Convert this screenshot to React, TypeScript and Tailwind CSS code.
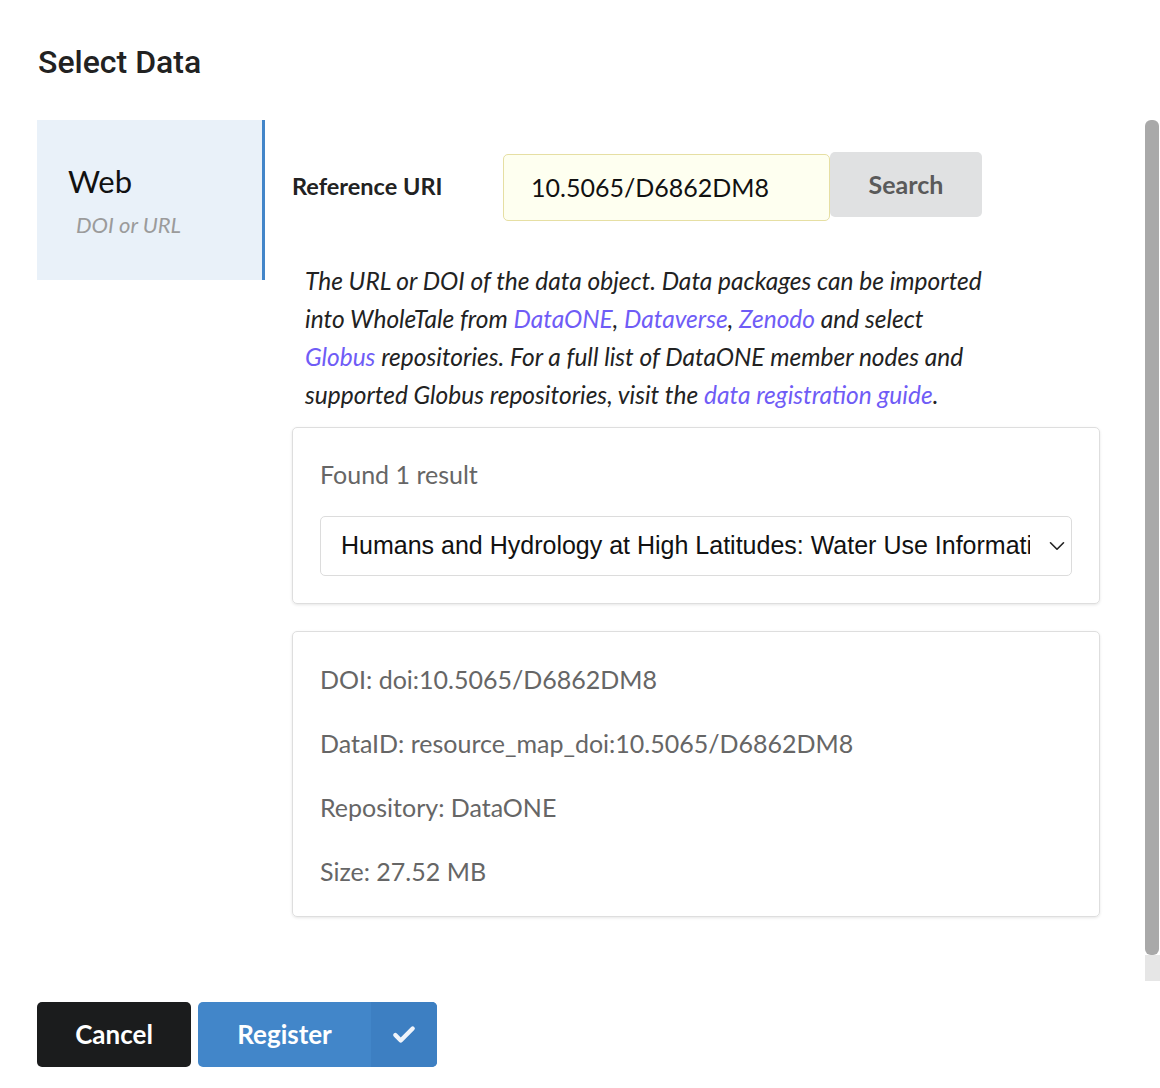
import { ChevronDown, Check } from "lucide-react";

const lato = "font-['Lato','Liberation_Sans',sans-serif]";

function DetailLine({ children }: { children: React.ReactNode }) {
  return <p className="text-[25px] leading-[30px] text-[#666]">{children}</p>;
}

export default function App() {
  return (
    <div className={`w-[1160px] h-[1088px] bg-white ${lato} text-[#1f1f1f]`}>
      <div className="h-[120px] pl-[38px] pt-[44px]">
        <h1 className="font-['Roboto',sans-serif] font-medium text-[32px] leading-[36px] text-[#222]">Select Data</h1>
      </div>

      <div className="flex h-[861px]">
        <div className="pl-[37px] flex gap-[27px]">
          {/* tabs */}
          <div className="w-[228px] h-[160px] bg-[#e9f1f9] border-r-[3px] border-[#4285c9] pl-[31px] pt-[42px]">
            <div className="text-[31px] leading-[38px] text-[#111]">Web</div>
            <div className="pl-[8px] mt-[11px] italic text-[22px] leading-[28px] text-[#9b9b9b]">DOI or URL</div>
          </div>

          {/* main */}
          <div className="w-[808px] pt-[32px]">
            <div className="flex items-start">
              <label className="w-[211px] pt-[20px] font-bold text-[23.5px] leading-[28px] text-[#222]">Reference URI</label>
              <div className="mt-[2px] w-[327px] h-[67px] rounded-[5px] border border-[#e6dfa3] bg-[#fefff0] pl-[27px] flex items-center text-[25px] text-[#111]">
                10.5065/D6862DM8
              </div>
              <button className="w-[152px] h-[65px] rounded-[5px] bg-[#e0e1e2] text-[#5a5a5a] font-bold text-[25px]">Search</button>
            </div>

            <p className="mt-[41px] ml-[13px] w-[692px] italic text-[24.5px] leading-[38px] text-[#222]">
              The URL or DOI of the data object. Data packages can be imported into WholeTale from{" "}
              <a className="text-[#6f5cf6]">DataONE</a>, <a className="text-[#6f5cf6]">Dataverse</a>,{" "}
              <a className="text-[#6f5cf6]">Zenodo</a> and select <a className="text-[#6f5cf6]">Globus</a> repositories. For a
              full list of DataONE member nodes and supported Globus repositories, visit the{" "}
              <a className="text-[#6f5cf6]">data registration guide</a>.
            </p>

            <div className="mt-[13px] rounded-[5px] border border-[#dedede] shadow-[0_1px_3px_rgba(0,0,0,0.1)] px-[27px] pt-[31px] pb-[27px]">
              <p className="text-[25px] leading-[30px] text-[#666]">Found 1 result</p>
              <div className="mt-[27px] h-[60px] rounded-[5px] border border-[#dcdcdc] flex items-center pl-[20px]">
                <span className="w-[689px] overflow-hidden whitespace-nowrap font-['Liberation_Sans',Arial,sans-serif] text-[25px] text-[#111]">
                  Humans and Hydrology at High Latitudes: Water Use Information
                </span>
                <ChevronDown className="ml-[14px] w-[26px] h-[26px] text-[#222]" strokeWidth={1.5} />
              </div>
            </div>

            <div className="mt-[27px] rounded-[5px] border border-[#dedede] shadow-[0_1px_3px_rgba(0,0,0,0.1)] px-[27px] pt-[32px] pb-[30px] flex flex-col gap-[34px]">
              <DetailLine>DOI: doi:10.5065/D6862DM8</DetailLine>
              <DetailLine>DataID: resource_map_doi:10.5065/D6862DM8</DetailLine>
              <DetailLine>Repository: DataONE</DetailLine>
              <DetailLine>Size: 27.52 MB</DetailLine>
            </div>
          </div>
        </div>

        <div className="flex-1" />

        {/* scrollbar */}
        <div className="w-[15px] flex flex-col">
          <div className="h-[835px] w-[14px] rounded-t-[6px] rounded-b-[6px] bg-[#a9a9a9]" />
          <div className="flex-1 bg-[#e6e6e6]" />
        </div>
      </div>

      <div className="pl-[37px] pt-[21px] flex gap-[7px]">
        <button className="w-[154px] h-[65px] rounded-[5px] bg-[#1b1c1d] text-white font-bold text-[26px]">Cancel</button>
        <button className="w-[239px] h-[65px] rounded-[5px] bg-[#4286c9] text-white font-bold text-[26px] flex overflow-hidden">
          <span className="w-[173px] h-full flex items-center justify-center">Register</span>
          <span className="flex-1 h-full flex items-center justify-center bg-[#3d7fc2]">
            <Check className="w-[26px] h-[26px] text-[#f0f4fa]" strokeWidth={4} />
          </span>
        </button>
      </div>
    </div>
  );
}
